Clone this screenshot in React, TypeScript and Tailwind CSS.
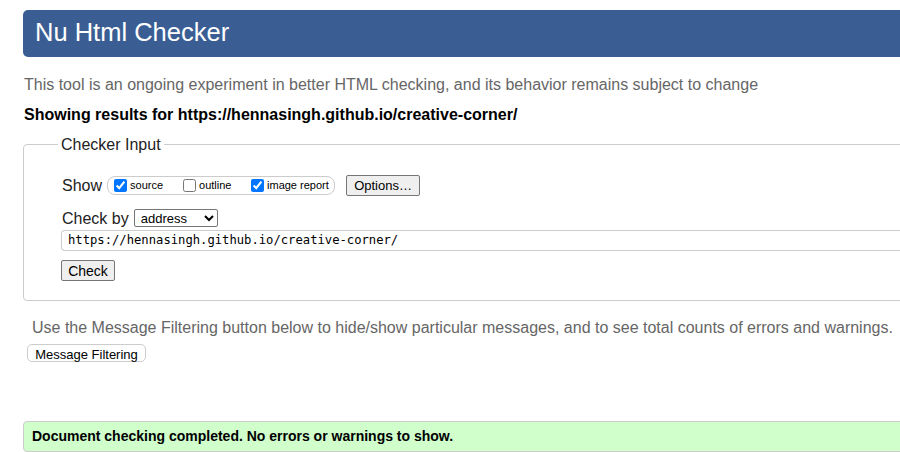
import React from 'react';

const Checker: React.FC = () => {
  return (
    <div className="w-[900px] h-[452px] overflow-hidden bg-white font-['Liberation_Sans',Arial,sans-serif] text-black">
      <div className="w-[960px] pl-[23px] pt-[10px]">
        <div className="h-[47px] bg-[#3a5e93] rounded-[5px] pl-[12px] flex items-center">
          <h1 className="text-[25.5px] leading-none text-white pb-[1px]">Nu Html Checker</h1>
        </div>

        <p className="mt-[18px] pl-[1px] text-[16px] leading-[19px] text-[#666]">
          This tool is an ongoing experiment in better HTML checking, and its behavior remains subject to change
        </p>
        <p className="mt-[11px] pl-[1px] text-[16px] leading-[19px] font-bold">
          Showing results for https://hennasingh.github.io/creative-corner/
        </p>

        <fieldset className="mt-[11px] border border-[#ccc] rounded-[4px] pl-[38px] pb-[19px]">
          <legend className="ml-[-4px] px-[3px] text-[16px] leading-[19px] text-[#222]">Checker Input</legend>

          <div className="mt-[21px] flex items-center h-[21px]">
            <span className="text-[16px] leading-[19px] text-[#222]">Show</span>
            <div className="ml-[5px] h-[19px] w-[228px] border border-[#ccc] rounded-[8px] flex items-center pl-[6px] text-[11px]">
              <label className="w-[69px] flex items-center gap-[3px]">
                <input type="checkbox" defaultChecked className="w-[13px] h-[13px]" />
                <span>source</span>
              </label>
              <label className="w-[68px] flex items-center gap-[3px]">
                <input type="checkbox" className="w-[13px] h-[13px]" />
                <span>outline</span>
              </label>
              <label className="flex items-center gap-[3px]">
                <input type="checkbox" defaultChecked className="w-[13px] h-[13px]" />
                <span>image report</span>
              </label>
            </div>
            <button className="ml-[11px] w-[74px] h-[21px] border border-[#767676] bg-[#efefef] rounded-[2px] text-[13px] text-center">
              Options…
            </button>
          </div>

          <div className="mt-[13px] flex items-center h-[18px]">
            <span className="text-[16px] leading-[19px] text-[#222]">Check by</span>
            <select
              defaultValue="address"
              className="ml-[5px] w-[84px] h-[18px] border border-[#767676] rounded-[2px] text-[13px] pl-[2px] bg-white"
            >
              <option value="address">address</option>
              <option value="file">file upload</option>
              <option value="text">text input</option>
            </select>
          </div>

          <div className="mt-[3px] -ml-[1px] h-[21px] border-y border-l border-[#ccc] rounded-l-[4px] flex items-center pl-[6px] font-['DejaVu_Sans_Mono',monospace] text-[12.2px]">
            https://hennasingh.github.io/creative-corner/
          </div>

          <button className="mt-[9px] -ml-[1px] w-[54px] h-[21px] border border-[#767676] bg-[#efefef] rounded-[2px] text-[14px] block">
            Check
          </button>
        </fieldset>

        <p className="mt-[17px] pl-[9px] text-[16px] leading-[19px] text-[#666]">
          Use the Message Filtering button below to hide/show particular messages, and to see total counts of errors and warnings.
        </p>
        <button className="mt-[7px] ml-[4px] w-[119px] h-[18px] border border-[#ccc] rounded-[5px] bg-white text-[13px] block">
          Message Filtering
        </button>

        <div className="mt-[59px] h-[31px] border border-[#ccc] rounded-[4px] bg-[#d0ffcc] flex items-center pl-[8px]">
          <span className="text-[14px] font-bold">Document checking completed. No errors or warnings to show.</span>
        </div>
      </div>
    </div>
  );
};

export default function App() {
  return <Checker />;
}
